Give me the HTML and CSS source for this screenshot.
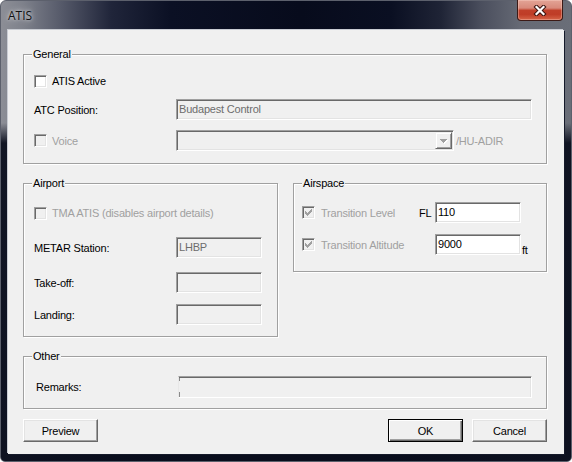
FILE: index.html
```html
<!DOCTYPE html>
<html>
<head>
<meta charset="utf-8">
<title>ATIS</title>
<link rel="stylesheet" href="styles.css">
</head>
<body>
<div class="window">
  <div class="titlebar">
    <span class="title">ATIS</span>
    <div class="close-btn">
      <svg width="14" height="11" viewBox="0 0 14 11">
        <path d="M3.5 2 L10.5 9 M10.5 2 L3.5 9" stroke="#3a1410" stroke-width="4.2" stroke-linecap="square" fill="none"/>
        <path d="M3.5 2 L10.5 9 M10.5 2 L3.5 9" stroke="#ffffff" stroke-width="2.2" stroke-linecap="square" fill="none"/>
      </svg>
    </div>
  </div>
  <div class="client">
    <div class="group general">
      <span class="gtitle">General</span>
      <div class="row row-active">
        <span class="chk"><span class="cb"></span>ATIS Active</span>
      </div>
      <div class="row row-atc">
        <span class="lbl">ATC Position:</span>
        <div class="edit w-atc">Budapest Control</div>
      </div>
      <div class="row row-voice">
        <span class="chk dis lbl"><span class="cb"></span>Voice</span>
        <div class="combo">
          <div class="dd">
            <svg width="8" height="5" shape-rendering="crispEdges">
              <g fill="#ffffff"><rect x="1" y="1" width="7" height="1"/><rect x="2" y="2" width="5" height="1"/><rect x="3" y="3" width="3" height="1"/><rect x="4" y="4" width="1" height="1"/></g>
              <g fill="#a0a0a0"><rect x="0" y="0" width="7" height="1"/><rect x="1" y="1" width="5" height="1"/><rect x="2" y="2" width="3" height="1"/><rect x="3" y="3" width="1" height="1"/></g>
            </svg>
          </div>
        </div>
        <span class="suffix">/HU-ADIR</span>
      </div>
    </div>

    <div class="mid">
      <div class="group airport">
        <span class="gtitle">Airport</span>
        <div class="row row-tma">
          <span class="chk dis"><span class="cb"></span>TMA ATIS (disables airport details)</span>
        </div>
        <div class="row row-metar">
          <span class="lbl">METAR Station:</span>
          <div class="edit w-short">LHBP</div>
        </div>
        <div class="row row-takeoff">
          <span class="lbl">Take-off:</span>
          <div class="edit w-short"></div>
        </div>
        <div class="row row-landing">
          <span class="lbl">Landing:</span>
          <div class="edit w-short"></div>
        </div>
      </div>

      <div class="group airspace">
        <span class="gtitle">Airspace</span>
        <div class="as-grid">
          <span class="chk dis"><span class="cb"><svg width="7" height="7" shape-rendering="crispEdges" fill="#a0a0a0"><rect x="0" y="2" width="1" height="3"/><rect x="1" y="3" width="1" height="3"/><rect x="2" y="4" width="1" height="3"/><rect x="3" y="3" width="1" height="3"/><rect x="4" y="2" width="1" height="3"/><rect x="5" y="1" width="1" height="3"/><rect x="6" y="0" width="1" height="3"/></svg></span>Transition Level</span>
          <span class="unit">FL</span>
          <div class="edit on">110</div>
          <span></span>
          <span class="chk dis"><span class="cb"><svg width="7" height="7" shape-rendering="crispEdges" fill="#a0a0a0"><rect x="0" y="2" width="1" height="3"/><rect x="1" y="3" width="1" height="3"/><rect x="2" y="4" width="1" height="3"/><rect x="3" y="3" width="1" height="3"/><rect x="4" y="2" width="1" height="3"/><rect x="5" y="1" width="1" height="3"/><rect x="6" y="0" width="1" height="3"/></svg></span>Transition Altitude</span>
          <span></span>
          <div class="edit on">9000</div>
          <span class="ft">ft</span>
        </div>
      </div>
    </div>

    <div class="group other">
      <span class="gtitle">Other</span>
      <div class="row row-remarks">
        <span class="lbl lbl-r">Remarks:</span>
        <div class="remarks"></div>
      </div>
    </div>

    <div class="buttons">
      <div class="btn">Preview</div>
      <div class="btn default">OK</div>
      <div class="btn">Cancel</div>
    </div>
  </div>
</div>
</body>
</html>
```

FILE: styles.css
```css
* { box-sizing: border-box; }
html, body { margin: 0; padding: 0; background: #ffffff; }
body { width: 572px; height: 462px; overflow: hidden; }

.window {
  width: 572px;
  height: 462px;
  border: 1px solid #5c606c;
  border-radius: 6px 6px 5px 5px;
  padding: 0 7px 7px 7px;
  display: flex;
  flex-direction: column;
  background:
    linear-gradient(180deg, rgba(9,13,28,0) 0, rgba(9,13,28,0) 122px, rgba(9,13,28,.93) 142px, rgba(9,13,28,.96) 100%),
    linear-gradient(90deg, #8c8e96 0, #7e818b 22px, #565a6a 60px, #20253a 110px, #0b1024 170px, #070b1c 300px, #0a0f22 390px, #1f2436 440px, #4a4e5d 480px, #666a75 520px, #6a6e78 572px);
  font-family: "Liberation Sans", Arial, sans-serif;
  font-size: 11px;
  letter-spacing: -0.2px;
  color: #000;
}

.titlebar {
  height: 29px;
  flex: none;
  display: flex;
  align-items: center;
}
.title {
  font-family: "Open Sans", "Noto Sans", sans-serif;
  font-size: 12px;
  letter-spacing: 0;
  color: #111;
  text-shadow: 0 0 6px rgba(255,255,255,.8), 0 0 3px rgba(255,255,255,.6);
}
.close-btn {
  align-self: flex-start;
  margin: -1px 1px 0 auto;
  width: 46px;
  height: 21px;
  border: 1px solid #3c1a16;
  border-top: none;
  border-radius: 0 0 4px 4px;
  background: linear-gradient(180deg, #e3a496 0%, #d88a7b 40%, #c0402a 52%, #bf3d27 72%, #d66548 100%);
  box-shadow: inset 0 0 0 1px rgba(255,220,210,.35);
  display: flex;
  align-items: center;
  justify-content: center;
}

.client {
  flex: none;
  height: 424px;
  background: #f0f0f0;
  padding: 24px 17px 12px 15px;
  box-shadow: -1px -1px 0 0 #c9ccd3, 1px 1px 0 0 #151a2a;
}

.group {
  position: relative;
  border: 1px solid #a0a0a0;
  box-shadow: inset 1px 1px 0 #ffffff, 1px 1px 0 #ffffff;
}
.gtitle {
  position: absolute;
  top: -7px;
  left: 8px;
  padding: 0 1px;
  line-height: 13px;
  background: #f0f0f0;
}

.row {
  display: flex;
  align-items: center;
}
.lbl {
  width: 142px;
  flex: none;
}

.chk {
  display: flex;
  align-items: center;
  gap: 5px;
  white-space: nowrap;
}
.chk.dis { color: #a0a0a0; }
.cb {
  width: 13px;
  height: 13px;
  flex: none;
  background: #ffffff;
  border: 1px solid;
  border-color: #a0a0a0 #ffffff #ffffff #a0a0a0;
  box-shadow: inset 1px 1px 0 #696969, inset -1px -1px 0 #e3e3e3;
  display: flex;
  align-items: center;
  justify-content: center;
}
.chk.dis .cb { background: #f0f0f0; }

.edit {
  height: 21px;
  border: 1px solid;
  border-color: #a0a0a0 #ffffff #ffffff #a0a0a0;
  box-shadow: inset 1px 1px 0 #696969, inset -1px -1px 0 #e3e3e3;
  background: #f0f0f0;
  color: #6d6d6d;
  padding: 0 2px;
  line-height: 19px;
  white-space: nowrap;
}
.edit.on { background: #ffffff; color: #000; }

/* General */
.general { padding: 16px 0 12px 10px; }
.row-active { height: 20px; }
.row-atc { height: 21px; margin-top: 8px; }
.row-voice { height: 21px; margin-top: 10px; }
.w-atc { width: 356px; }
.combo {
  width: 278px;
  height: 21px;
  padding: 1px;
  border: 1px solid;
  border-color: #a0a0a0 #ffffff #ffffff #a0a0a0;
  box-shadow: inset 1px 1px 0 #696969, inset -1px -1px 0 #e3e3e3;
  background: #f0f0f0;
  display: flex;
  justify-content: flex-end;
}
.dd {
  width: 17px;
  height: 17px;
  border: 1px solid;
  border-color: #f0f0f0 #696969 #696969 #f0f0f0;
  box-shadow: inset 1px 1px 0 #ffffff, inset -1px -1px 0 #a0a0a0;
  background: #f0f0f0;
  display: flex;
  align-items: center;
  justify-content: center;
  padding-left: 1px;
  padding-top: 1px;
}
.suffix { margin-left: 2px; color: #a0a0a0; }

/* Middle */
.mid {
  display: flex;
  align-items: flex-start;
  gap: 15px;
  margin-top: 19px;
}
.airport { width: 255px; padding: 19px 0 11px 10px; }
.row-tma { height: 20px; }
.row-metar { height: 21px; margin-top: 14px; }
.row-takeoff { height: 21px; margin-top: 14px; }
.row-landing { height: 21px; margin-top: 11px; }
.w-short { width: 86px; }

.airspace { width: 254px; padding: 18px 0 16px 8px; }
.as-grid {
  display: grid;
  grid-template-columns: 117px 16px 86px auto;
  grid-auto-rows: 21px;
  row-gap: 11px;
  align-items: center;
}
.as-grid .chk { gap: 6px; }
.ft { align-self: end; line-height: 11px; margin-bottom: -1px; padding-left: 1px; }

/* Other */
.other { margin-top: 19px; padding: 19px 0 10px 12px; }
.row-remarks { height: 22px; }
.lbl-r { width: 142px; }
.remarks {
  width: 354px;
  height: 22px;
  border-top: 1px solid #a0a0a0;
  border-right: 1px solid #ffffff;
  border-bottom: 1px solid #ffffff;
  border-left: 1px solid #e8e8e8;
  box-shadow: inset 0 1px 0 #696969, inset -1px 0 0 #e3e3e3;
  background:
    linear-gradient(#8a8a8a, #8a8a8a) left top / 1px 4px no-repeat,
    linear-gradient(#8a8a8a, #8a8a8a) left bottom / 1px 5px no-repeat,
    #f0f0f0;
}

/* Buttons */
.buttons {
  display: flex;
  gap: 9px;
  margin-top: 10px;
}
.btn {
  width: 75px;
  height: 23px;
  background: #f0f0f0;
  border: 1px solid;
  border-color: #ffffff #696969 #696969 #ffffff;
  box-shadow: inset -1px -1px 0 #a0a0a0, inset 1px 1px 0 #e3e3e3;
  display: flex;
  align-items: center;
  justify-content: center;
}
.btn:first-child { margin-right: auto; }
.btn.default {
  border: 1px solid #000;
  box-shadow: inset 1px 1px 0 #ffffff, inset -1px -1px 0 #696969, inset -2px -2px 0 #a0a0a0;
}
```
